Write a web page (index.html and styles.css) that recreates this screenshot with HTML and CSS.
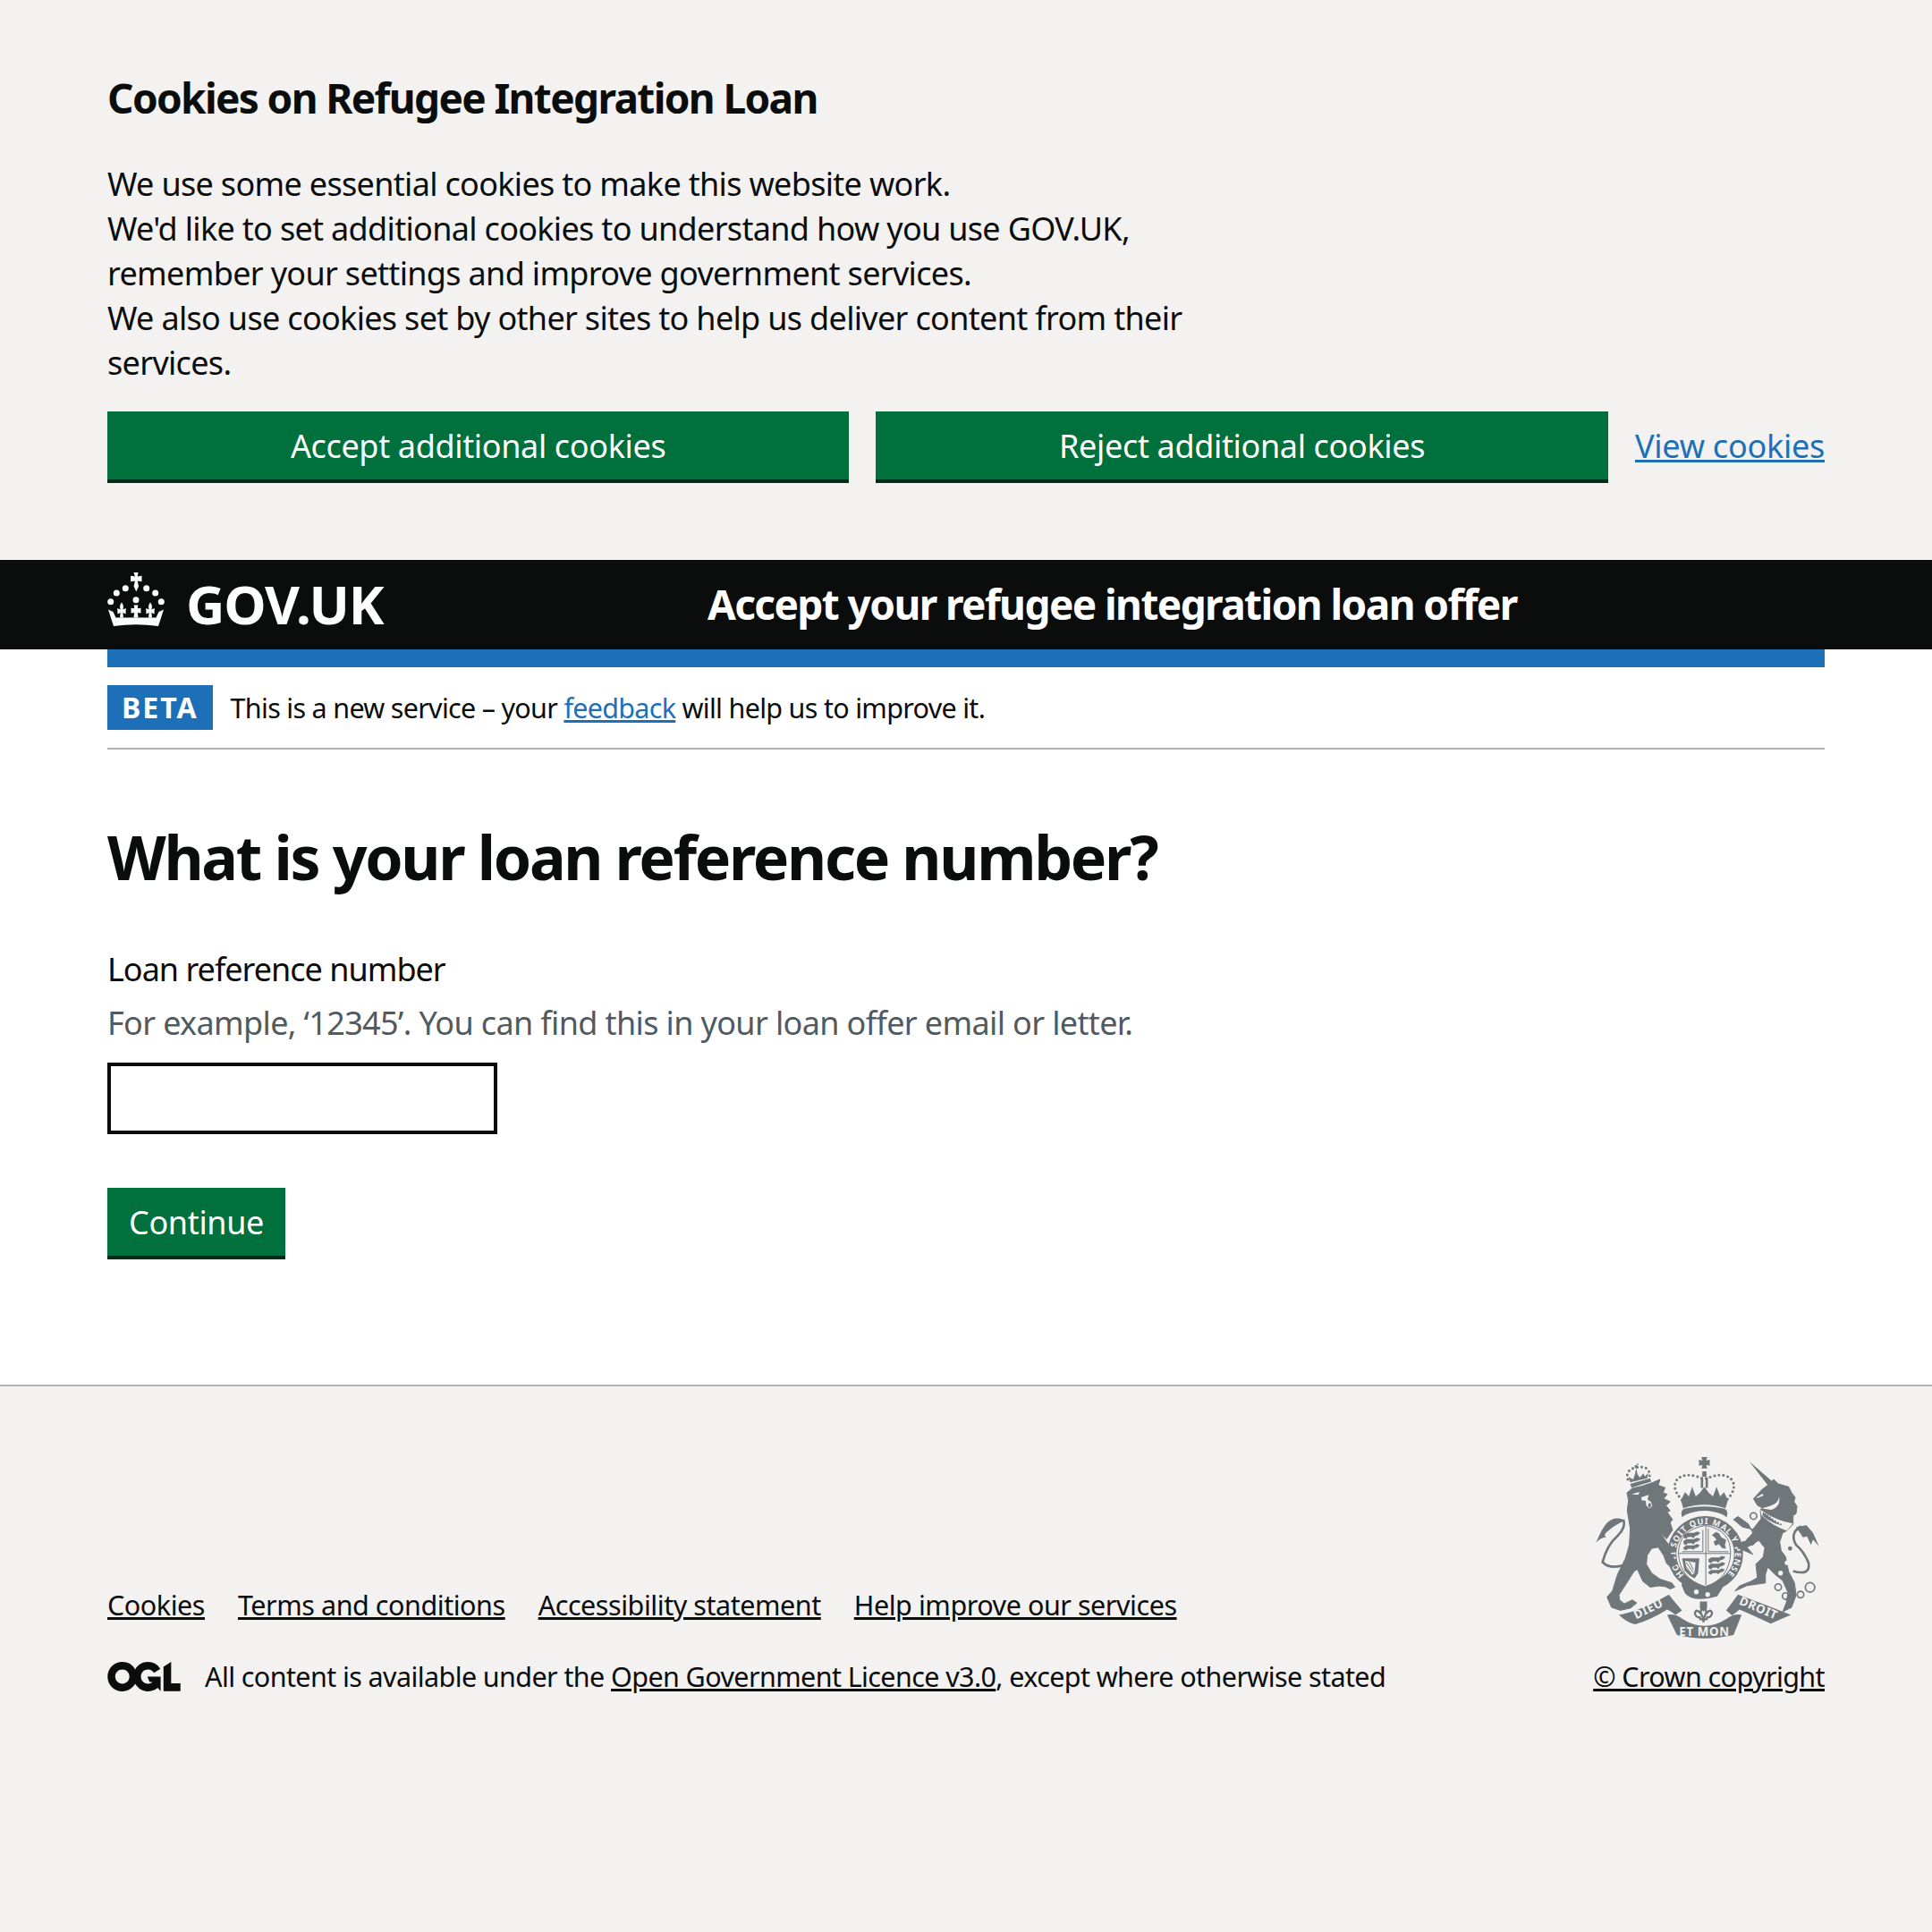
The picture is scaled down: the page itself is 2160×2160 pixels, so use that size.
FILE: index.html
```html
<!DOCTYPE html>
<html lang="en">
<head>
    <meta charset="UTF-8">
    <title>What is your loan reference number?</title>
    <link rel="stylesheet" href="styles.css">
</head>
<body>

    <div class="cookie-banner">
        <h2 class="cookie-title">Cookies on Refugee Integration Loan</h2>
        <p class="cookie-text">We use some essential cookies to make this website work.<br>We'd like to set additional cookies to understand how you use GOV.UK, remember your settings and improve government services.<br>We also use cookies set by other sites to help us deliver content from their services.</p>
        <div class="cookie-actions">
            <button class="btn btn-grow">Accept additional cookies</button>
            <button class="btn btn-grow">Reject additional cookies</button>
            <a class="link cookie-link" href="#">View cookies</a>
        </div>
    </div>

    <header class="header">
        <div class="logo">
            <svg class="crown" viewBox="0 0 64 60" fill="#fff">
                <circle cx="32" cy="30.700" r="3.500"/><circle cx="20.300" cy="17.700" r="3.500"/><circle cx="43.700" cy="17.700" r="3.500"/><circle cx="10.300" cy="23" r="3.500"/><circle cx="53.700" cy="23" r="3.500"/><circle cx="3.700" cy="32.700" r="3.500"/><circle cx="60.300" cy="32.700" r="3.500"/>
                <path d="M29.500 0h5l-.8 4.500 4.800-.8v6.600l-4.800-.8 1.300 6-2.700 6-2.700-6 1.300-6-4.800.8V3.700l4.800.8z"/>
                <path d="M1 41.500 6.500 44l3 6.500h45l3-6.500 5.500-2.500L57 60q-25-3.500-50 0z"/>
                <path d="M29.700 36.500h4.600l-.5 3.700 3.700-.5v5.800l-3.700-.5.8 5.500h-5.200l.8-5.500-3.700.5v-5.800l3.700.5z"/>
                <path id="fleur" d="M16 33.500q3 4 1.200 8l3.600-1.500-.3 6.500-3.200-1.500.7 5.500h-4l.7-5.500-3.200 1.500-.3-6.500 3.600 1.500q-1.800-4 1.200-8z"/>
                <use href="#fleur" x="32"/>
            </svg>
            <span class="logo-text">GOV.UK</span>
        </div>
        <span class="service-name">Accept your refugee integration loan offer</span>
    </header>

    <div class="width-container">
        <div class="blue-bar"></div>
        <div class="phase-banner">
            <strong class="tag">BETA</strong>
            <span class="phase-text">This is a new service – your <a class="link" href="#">feedback</a> will help us to improve it.</span>
        </div>

        <main class="main">
            <h1 class="heading">What is your loan reference number?</h1>
            <label class="label" for="ref">Loan reference number</label>
            <div class="hint">For example, ‘12345’. You can find this in your loan offer email or letter.</div>
            <input class="input" id="ref" type="text">
            <button class="btn">Continue</button>
        </main>
    </div>

    <footer class="footer">
        <div class="footer-left">
            <ul class="footer-links">
                <li><a href="#">Cookies</a></li>
                <li><a href="#">Terms and conditions</a></li>
                <li><a href="#">Accessibility statement</a></li>
                <li><a href="#">Help improve our services</a></li>
            </ul>
            <div class="licence">
                <svg class="ogl" viewBox="0 0 483.2 195.700" fill="#0b0c0c"><path d="M421.500 142.800V.1l-50.700 32.300v161.100h112.400v-50.700zm-122.300-9.600A47.120 47.120 0 0 1 221 97.800c0-26 21.100-47.100 47.100-47.100 16.700 0 31.400 8.700 39.700 21.800l42.700-27.200A97.630 97.630 0 0 0 268.100 0c-36.500 0-68.300 20.100-85.100 49.700A98 98 0 0 0 97.800 0C43.900 0 0 43.900 0 97.800s43.900 97.800 97.800 97.800c36.500 0 68.300-20.100 85.100-49.700a97.760 97.760 0 0 0 149.600 25.400l19.400 22.800V97.800h-88.300l15.200 35.400zM97.800 145c-26 0-47.100-21.100-47.100-47.100s21.100-47.100 47.100-47.100 47.200 21 47.200 47S123.800 145 97.800 145"/></svg>
                <span>All content is available under the <a href="#">Open Government Licence v3.0</a>, except where otherwise stated</span>
            </div>
        </div>
        <div class="copyright">
            <svg class="crest" viewBox="70 60 755 610">
                <!-- garter and shield -->
                <circle class="crest-line" cx="440" cy="385" r="112" stroke-width="30"/>
                <path id="garter-arc" class="crest-none" d="M369 456A100 100 0 1 1 511 456"/>
                <text class="crest-garter" textLength="465"><textPath href="#garter-arc">HONI SOIT QUI MAL Y PENSE</textPath></text>
                <path class="crest-bg crest-thin" d="M350 385Q350 305 440 290 528 305 525 385 520 470 440 495 355 470 350 385z"/>
                <path class="crest-line crest-thin" d="M442 292V490M352 384H524M362 378H432V305M450 300V378H518"/>
                <g id="leos-top" class="crest-fill">
                    <path d="M366 322l10-7h26l10-5 12 4-8 8-10 3-6 8-6-5-14 1-4 6-8-3z"/>
                    <path d="M366 343l10-7h26l10-5 12 4-8 8-10 3-6 8-6-5-14 1-4 6-8-3z"/>
                    <path d="M366 364l10-7h26l10-5 10 4-8 8-8 2-6 6-6-4-14 1-4 4-8-3z"/>
                </g>
                <path class="crest-fill" d="M462 322l14-10 10 4 8 14 16 8-4 18 4 12-14-2-10-14-12 6-6-14 10-6-8-10z"/>
                <use href="#leos-top" x="84" y="82"/>
                <path class="crest-fill" d="M362 400H420L416 450 404 468 388 458 370 440z"/>
                <path class="crest-bg" d="M372 408l36 6-4 36-8 6-20-22z"/>
                <path class="crest-line crest-thin" d="M376 414l24 34M386 412l14 26M372 424l20 26"/>
                <!-- royal crown -->
                <path class="crest-fill" d="M427 60h20l-4 12 12-3v20l-12-3 4 12h-20l4-12-12 3V69l12 3zM425 128h8v36h-8zM441 128h8v36h-8zM430 108h14v18h-14z"/>
                <path class="crest-dots" d="M362 204Q328 170 342 140 362 112 410 125L437 134 465 125Q512 112 532 140 546 170 512 204"/>
                <path class="crest-fill" d="M358 205L372 178 385 192 396 160 408 192 422 180 437 160 452 180 466 192 478 160 490 192 503 178 516 205 508 232Q437 208 366 232z"/>
                <path class="crest-fill" d="M362 262Q352 236 376 232 437 220 498 232 522 236 512 262L500 254Q437 226 374 254z"/>
                <!-- buckle, fleur and ribbon -->
                <path class="crest-fill" d="M360 490Q370 465 385 478 430 510 480 498L510 480 480 528Q400 550 372 518z"/>
                <circle class="crest-bgfill" cx="410" cy="513" r="8"/><circle class="crest-bgfill" cx="448" cy="522" r="8"/>
                <path class="crest-fill" d="M422 545h24v22l-12 12-12-12z"/>
                <path class="crest-line" stroke-width="7" d="M434 560Q420 575 428 590 434 600 434 615M434 560Q448 575 440 590 434 600 434 615M428 590Q410 565 405 585 410 602 425 598M440 590Q458 565 463 585 458 602 443 598M420 605H448"/>
                <path class="crest-fill" d="M150 590Q215 580 318 522 335 545 362 575L340 590Q330 580 312 572 260 605 205 622 175 615 150 590z"/>
                <path class="crest-fill" d="M312 590Q340 585 365 605 437 650 510 605 535 585 562 590L535 658Q437 680 345 658z"/>
                <path class="crest-fill" d="M510 575Q530 550 550 522 640 555 728 590 690 605 660 620 610 595 555 572 540 585 530 592z"/>
                <text class="crest-motto" x="255" y="582" transform="rotate(-26 255 582)">DIEU</text>
                <text class="crest-motto" x="437" y="662">ET MON</text>
                <text class="crest-motto" x="614" y="580" transform="rotate(23 614 580)">DROIT</text>
                <!-- lion -->
                <g transform="translate(60 45)">
                    <path class="crest-fill crest-round" d="M117 135 135 120 170 112 205 100 228 90 222 110 245 118 238 135 252 140 240 155 262 165 248 178 262 195 252 200 270 225 262 235 270 260 250 290 228 268 250 300 272 325 262 340 285 368 278 380 262 383 250 372 240 345 222 318 200 322 185 345 182 375 200 405 228 425 268 438 278 452 262 458 245 450 225 448 195 452 170 432 152 392 140 400 115 440 90 478 92 495 108 508 135 495 150 505 130 522 95 530 65 520 50 485 68 465 85 410 112 355 125 310 128 255 118 195 122 160z"/>
                    <path class="crest-line" stroke-width="8" d="M118 375Q60 395 35 368 50 310 85 280 115 250 105 225"/>
                    <path class="crest-fill" d="M110 228Q90 215 65 225 40 235 13 303 30 285 47 285 35 275 55 262 72 245 110 228z"/>
                    <path class="crest-bgfill" d="M132 140l28-8-6 10zM165 150l25-8-4 16 12 8 4 14-10 8-10-10-2-16-14-2z"/>
                    <ellipse class="crest-fill" cx="193" cy="177" rx="5" ry="8"/>
                    <path class="crest-fill" d="M128 105 195 86 198 98 132 118zM128 100l-6-18 16 8 6-18 4-20 4 20 8 12 12-14 5 10 12-12-4 18z"/>
                    <path class="crest-dots" stroke-width="6" stroke-dasharray="0 9" d="M120 90Q110 60 147 50 195 42 193 80"/>
                    <path class="crest-fill" d="M143 42h8v-8l6 8h-6v10h-8z"/>
                </g>
                <!-- unicorn -->
                <g transform="translate(450 45)">
                    <path class="crest-fill" d="M138 30 216 98 202 112z"/>
                    <path class="crest-fill crest-round" d="M205 105 220 90 235 105 270 115 280 135 292 150 288 165 298 180 295 205 285 212 285 240 265 262 250 270 240 300 245 330 260 350 270 400 290 438 295 480 280 520 250 535 262 505 268 470 250 430 225 410 200 385 192 410 192 438 130 447 90 465 105 448 145 432 165 420 160 375 185 350 190 320 170 295 130 318 150 342 100 320 95 305 125 298 150 270 135 240 100 215 85 225 115 250 150 258 178 222 175 195 180 185 165 177 152 155 180 125z"/>
                    <path class="crest-bgfill" d="M238 148Q236 172 205 180L180 188 212 192Q244 182 238 148zM160 152l22-14 4 6-18 8z"/>
                    <path class="crest-bgfill" d="M176 192 178 212Q220 250 264 264L284 238Q230 230 176 192z"/>
                    <path class="crest-line" stroke-width="3" d="M178 212Q220 250 264 264"/>
                    <path class="crest-fill" d="M182 212l2-14 5 7 4-3 3 8 5-3 2 9 6-3 2 9 6-2 3 9 6-2 3 8 7-3 2 9 6-4 4 8-25-8-27-14z"/>
                    <circle class="crest-bgfill" cx="265" cy="370" r="8"/><circle class="crest-bgfill" cx="243" cy="405" r="8"/><circle class="crest-bgfill" cx="275" cy="322" r="12"/>
                    <circle class="crest-fill" cx="275" cy="322" r="7"/>
                    <g class="crest-line" stroke-width="5">
                        <circle cx="152" cy="213" r="11"/><circle cx="143" cy="298" r="13"/><circle cx="235" cy="452" r="11"/><circle cx="260" cy="482" r="11"/><circle cx="310" cy="477" r="11"/><circle cx="342" cy="453" r="16"/>
                    </g>
                    <path class="crest-line" stroke-width="8" d="M285 398Q345 415 337 370 320 330 295 310 272 270 312 248"/>
                    <path class="crest-fill" d="M295 250 330 244 352 270 372 315 352 292 345 310 332 282 318 285z"/>
                </g>
            </svg>
            <a href="#">© Crown copyright</a>
        </div>
    </footer>

</body>
</html>
```

FILE: styles.css
```css
* {
    box-sizing: border-box;
}

body {
    margin: 0;
    font-family: "Noto Sans", sans-serif;
    font-size: 36px;
    line-height: 50px;
    letter-spacing: -0.68px;
    color: #0b0c0c;
    background-color: #fff;
}

.link {
    color: #1d70b8;
}

.cookie-banner {
    background-color: #f3f2f1;
    padding: 79px 120px 86px;
}

.cookie-title {
    margin: 0 0 42px;
    font-size: 46px;
    line-height: 60px;
    font-weight: 700;
    letter-spacing: -1.65px;
}

.cookie-text {
    margin: 0 0 29px;
    width: 1240px;
}

.cookie-actions {
    display: flex;
    align-items: center;
    gap: 30px;
}

.btn {
    display: block;
    height: 80px;
    padding: 0 24px 2px;
    border: none;
    border-radius: 0;
    background-color: #00703c;
    box-shadow: inset 0 -4px 0 #002d18;
    color: #fff;
    font-family: inherit;
    font-size: 36px;
    line-height: 1;
    letter-spacing: -0.35px;
}

.btn-grow {
    flex: 1 1 auto;
}

.cookie-link {
    padding-bottom: 3px;
    white-space: nowrap;
    letter-spacing: -0.25px;
}

.header {
    display: flex;
    align-items: center;
    height: 100px;
    padding: 0 120px 2px;
    background-color: #0b0c0c;
    color: #fff;
}

.logo {
    display: flex;
    align-items: center;
    gap: 24px;
    width: 671px;
}

.crown {
    flex: none;
    width: 64px;
    height: 60px;
    margin-bottom: 10px;
}

.logo-text {
    font-size: 60px;
    font-weight: 700;
    line-height: 1;
    letter-spacing: -1.1px;
}

.service-name {
    font-size: 46px;
    font-weight: 700;
    letter-spacing: -1.6px;
}

.width-container {
    padding: 0 120px;
}

.blue-bar {
    height: 20px;
    background-color: #1d70b8;
}

.phase-banner {
    display: flex;
    align-items: center;
    gap: 20px;
    height: 92px;
    border-bottom: 2px solid #b1b4b6;
    font-size: 30.5px;
    letter-spacing: -0.7px;
}

.tag {
    padding: 0 16px;
    background-color: #1d70b8;
    color: #fff;
    font-size: 32px;
    line-height: 50px;
    letter-spacing: 2px;
}

.main {
    padding: 70px 0 140px;
}

.heading {
    margin: 0 0 51px;
    font-size: 68px;
    line-height: 100px;
    letter-spacing: -2.3px;
}

.label {
    display: block;
    margin-bottom: 10px;
    letter-spacing: -1px;
}

.hint {
    margin-bottom: 19px;
    color: #505a5f;
    letter-spacing: -0.64px;
}

.input {
    display: block;
    width: 436px;
    height: 80px;
    margin-bottom: 60px;
    border: 4px solid #0b0c0c;
    border-radius: 0;
}

.footer {
    display: flex;
    justify-content: space-between;
    align-items: flex-end;
    height: 612px;
    padding: 80px 120px 261px;
    border-top: 2px solid #b1b4b6;
    background-color: #f3f2f1;
    font-size: 30.5px;
    letter-spacing: -0.6px;
}

.footer a {
    color: #0b0c0c;
}

.footer-links {
    display: flex;
    gap: 37px;
    margin: 0 0 30px;
    padding: 0;
    list-style: none;
    letter-spacing: -0.45px;
}

.licence {
    display: flex;
    align-items: center;
    gap: 27px;
}

.ogl {
    width: 82px;
    height: 33px;
}

.copyright {
    display: flex;
    flex-direction: column;
    align-items: flex-end;
    gap: 17px;
}

.crest {
    display: block;
    width: 252px;
    height: 203px;
    margin-right: 5px;
}

.crest-fill {
    fill: #6f777b;
}

.crest-round {
    stroke: #6f777b;
    stroke-width: 3;
    stroke-linejoin: round;
}

.crest-bgfill {
    fill: #f3f2f1;
}

.crest-bg {
    fill: #f3f2f1;
    stroke: #6f777b;
}

.crest-line {
    fill: none;
    stroke: #6f777b;
}

.crest-none {
    fill: none;
}

.crest-thin {
    stroke-width: 3;
}

.crest-dots {
    fill: none;
    stroke: #6f777b;
    stroke-width: 9;
    stroke-linecap: round;
    stroke-dasharray: 0 15;
}

.crest-garter {
    fill: #f3f2f1;
    font-size: 28px;
    font-weight: 700;
    letter-spacing: 0;
}

.crest-motto {
    fill: #f3f2f1;
    font-size: 40px;
    font-weight: 700;
    letter-spacing: 2px;
    text-anchor: middle;
}
```
